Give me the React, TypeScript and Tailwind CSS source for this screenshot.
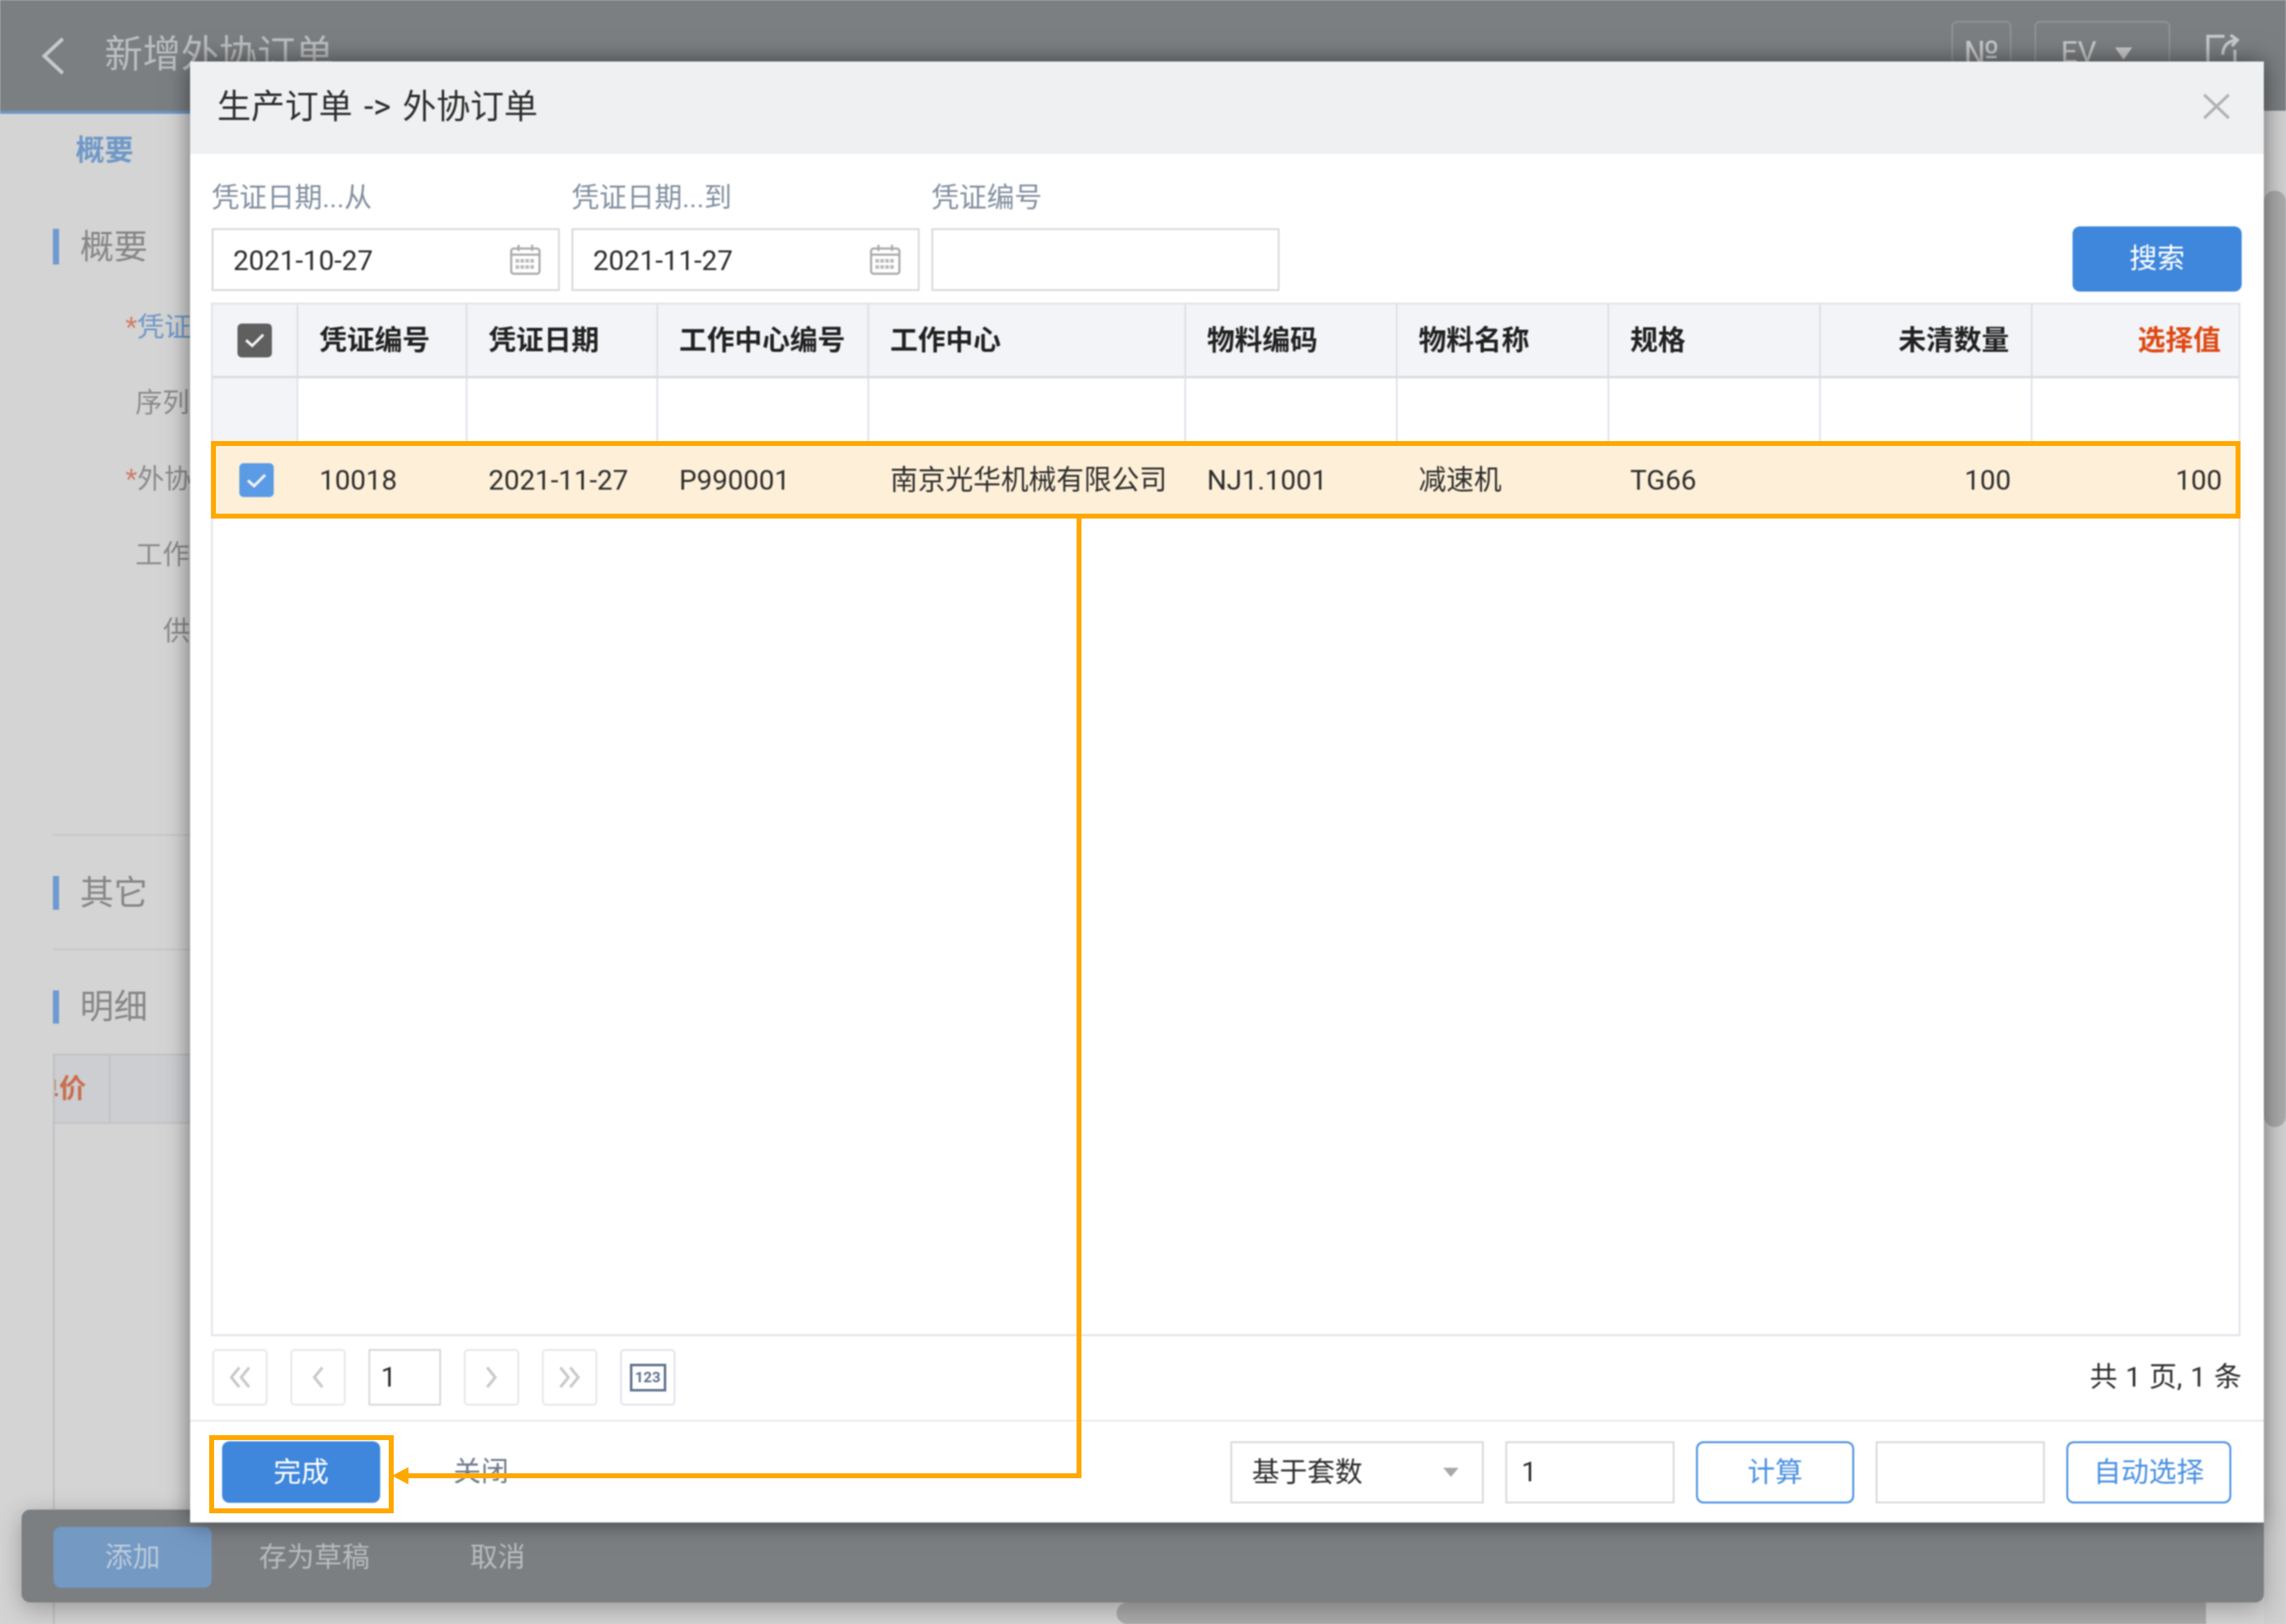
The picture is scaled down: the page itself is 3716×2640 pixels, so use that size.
import React from "react";

const headers = [
  { t: "凭证编号", c: "pl-[34px] border-r-[3px]" },
  { t: "凭证日期", c: "pl-[34px] border-r-[3px]" },
  { t: "工作中心编号", c: "pl-[34px] border-r-[3px]" },
  { t: "工作中心", c: "pl-[34px] border-r-[3px]" },
  { t: "物料编码", c: "pl-[34px] border-r-[3px]" },
  { t: "物料名称", c: "pl-[34px] border-r-[3px]" },
  { t: "规格", c: "pl-[34px] border-r-[3px]" },
  { t: "未清数量", c: "justify-end pr-[35px] border-r-[3px]" },
  { t: "选择值", c: "justify-end pr-[29px] text-[#dd4a14]" },
];

const row = [
  { t: "10018", c: "pl-[34px]" },
  { t: "2021-11-27", c: "pl-[34px]" },
  { t: "P990001", c: "pl-[34px]" },
  { t: "南京光华机械有限公司", c: "pl-[34px]" },
  { t: "NJ1.1001", c: "pl-[34px]" },
  { t: "减速机", c: "pl-[34px]" },
  { t: "TG66", c: "pl-[34px]" },
  { t: "100", c: "justify-end pr-[35px]" },
  { t: "100", c: "justify-end pr-[27px]" },
];

const cols = "grid grid-cols-[139px_275px_310px_343px_515px_344px_344px_344px_344px_335px]";

function Calendar() {
  return (
    <svg width="52" height="52" viewBox="0 0 52 52" fill="none" className="shrink-0">
      <rect x="3" y="8" width="46" height="41" rx="4" stroke="#ababab" strokeWidth="3.5" />
      <path d="M3 18h46" stroke="#ababab" strokeWidth="3.5" />
      <path d="M15 2v10M37 2v10" stroke="#ababab" strokeWidth="3.5" />
      <g fill="#bdbdbd">
        {[10, 18, 26, 34].map((x) => (
          <React.Fragment key={x}>
            <rect x={x} y="25" width="6" height="6" />
            <rect x={x} y="35" width="6" height="6" />
          </React.Fragment>
        ))}
      </g>
    </svg>
  );
}

function Check({ bg }: { bg: string }) {
  return (
    <div className={`w-[56px] h-[55px] rounded-[7px] flex items-center justify-center ${bg}`}>
      <svg width="34" height="26" viewBox="0 0 34 26" fill="none">
        <path d="M3 13l10 9L31 4" stroke="#f4f4f4" strokeWidth="4.5" />
      </svg>
    </div>
  );
}

function DateField({ label, value, icon }: { label: string; value: string; icon?: boolean }) {
  return (
    <div className="flex flex-col w-[566px] mb-[1px]">
      <div className="h-[60px] leading-[64px] mb-[21px] text-[#8390a0] text-[45px]">{label}</div>
      <div className="h-[102px] border-[3px] border-[#dadada] flex items-center justify-between pl-[32px] pr-[27px] text-[45px] text-[#2c2c2c]">
        <span className="pt-[4px]">{value}</span>
        {icon && <Calendar />}
      </div>
    </div>
  );
}

function PagerBtn({ d }: { d: string }) {
  return (
    <div className="w-[90px] h-[92px] border-[3px] border-[#e7e8ea] rounded-[7px] flex items-center justify-center">
      <svg width="42" height="36" viewBox="0 0 42 36" fill="none">
        <path d={d} stroke="#c9c9c9" strokeWidth="4.5" />
      </svg>
    </div>
  );
}

const labels = [
  { star: true, t: "凭证日期", c: "ml-[118px] text-[#6f98c8]" },
  { star: false, t: "序列号码", c: "ml-[134px] text-[#8b8b8b]" },
  { star: true, t: "外协订单", c: "ml-[118px] text-[#8b8b8b]" },
  { star: false, t: "工作中心", c: "ml-[134px] text-[#8b8b8b]" },
  { star: false, t: "供应商", c: "ml-[179px] text-[#8b8b8b]" },
];

export default function App() {
  return (
    <div className="relative w-[3716px] h-[2640px] overflow-hidden bg-[#d4d4d4] font-['Roboto','Noto_Sans_CJK_SC',sans-serif]">
      <div className="absolute inset-0 blur-[1.2px]">
        {/* page below the dialog */}
        <div className="h-full flex flex-col">
          <header className="h-[185px] shrink-0 bg-[#7b7f82] border-b-[5px] border-[#6d95c6] flex items-start">
            <svg width="40" height="60" viewBox="0 0 40 60" fill="none" className="ml-[66px] mt-[61px]">
              <path d="M36 2L6 30l30 28" stroke="#c6c8c9" strokeWidth="6" />
            </svg>
            <div className="ml-[64px] mt-[54px] text-[62px] leading-[70px] text-[#bcbebf]">新增外协订单</div>
            <div className="ml-auto mt-[34px] w-[98px] h-[100px] border-[3px] border-[#8e9295] rounded-[9px] flex justify-center pt-[20px] text-[56px] leading-[60px] text-[#c6c8c9]">
              №
            </div>
            <div className="ml-[37px] mt-[34px] w-[221px] h-[100px] border-[3px] border-[#8e9295] rounded-[9px] flex items-start pl-[40px] pt-[20px] text-[48px] leading-[56px] text-[#c6c8c9]">
              EV
              <svg width="28" height="20" viewBox="0 0 28 20" className="ml-[30px] mt-[20px]">
                <path d="M0 0h28L14 20z" fill="#c6c8c9" />
              </svg>
            </div>
            <svg width="56" height="46" viewBox="0 0 56 46" fill="none" className="ml-[58px] mr-[74px] mt-[55px]">
              <path d="M30 4H3v42M47 46V26" stroke="#c6c8c9" strokeWidth="5" />
              <path d="M27 34C28 20 34 12 50 10M40 2l11 8-9 10" stroke="#c6c8c9" strokeWidth="5" />
            </svg>
          </header>

          <div className="flex-1 flex flex-col pl-[86px] min-h-0">
            <div className="h-[114px] shrink-0 flex items-center pl-[37px] pt-[4px] text-[47px] font-bold text-[#6f98c8]">概要</div>
            <div className="mt-[73px] h-[58px] shrink-0 flex items-center border-l-[10px] border-[#6f9ad0] pl-[34px] text-[55px] text-[#868686]">概要</div>
            <div className="mt-[39px] shrink-0 flex flex-col">
              {labels.map((l) => (
                <div key={l.t} className={`h-[123.5px] flex items-center pt-[2px] text-[44px] ${l.c}`}>
                  {l.star && <span className="text-[#cf7d6a]">*</span>}
                  {l.t}
                </div>
              ))}
            </div>
            <div className="mt-[269px] border-t-[3px] border-[#c8c8c8] shrink-0" />
            <div className="mt-[65px] h-[55px] shrink-0 flex items-center border-l-[10px] border-[#6f9ad0] pl-[34px] text-[55px] text-[#868686]">其它</div>
            <div className="mt-[63px] border-t-[3px] border-[#c8c8c8] shrink-0" />
            <div className="mt-[65px] h-[54px] shrink-0 flex items-center border-l-[10px] border-[#6f9ad0] pl-[34px] text-[55px] text-[#868686]">明细</div>
            <div className="mt-[49px] flex-1 flex flex-col border-l-[3px] border-[#bfc0c4]">
              <div className="h-[114px] shrink-0 flex bg-[#cdced1] border-y-[3px] border-[#c2c3c7]">
                <div className="w-[91px] overflow-hidden flex items-center justify-end pr-[37px] border-r-[3px] border-[#c2c3c7] text-[44px] font-bold text-[#c96f50] whitespace-nowrap shrink-0">
                  单价
                </div>
              </div>
            </div>
          </div>
        </div>

        {/* window scrollbars */}
        <div className="absolute right-0 top-[180px] bottom-0 w-[36px] bg-[#d0d0d0]">
          <div className="absolute left-0 right-0 top-[130px] h-[1522px] rounded-full bg-[#ababab]" />
        </div>
        <div className="absolute left-[1815px] bottom-0 w-[1771px] h-[35px] rounded-l-full bg-[#ababab]" />

        {/* page footer */}
        <div className="absolute left-[35px] top-[2454px] w-[3645px] h-[151px] bg-[#7b7f82] rounded-[14px] shadow-[0_10px_40px_rgba(0,0,0,0.28)] flex items-start pt-[28px] pl-[52px] text-[45px] text-[#b9bbbc]">
          <div className="w-[257px] h-[99px] rounded-[12px] bg-[#7499c3] flex items-center justify-center text-[#bccbdc]">添加</div>
          <div className="h-[99px] flex items-center ml-[77px]">存为草稿</div>
          <div className="h-[99px] flex items-center ml-[163px]">取消</div>
        </div>

        {/* dialog */}
        <div className="absolute left-[309px] top-[100px] w-[3371px] h-[2375px] bg-white flex flex-col shadow-[0_0_36px_rgba(0,0,0,0.5)]">
          <div className="h-[150px] shrink-0 bg-[#eff0f2] flex items-center justify-between pl-[44px] pr-[55px] pb-[4px] text-[55px] [word-spacing:5px] text-[#2e2e2e]">
            <span>生产订单 -&gt; 外协订单</span>
            <svg width="44" height="42" viewBox="0 0 44 42" fill="none">
              <path d="M2 2l40 38M42 2L2 40" stroke="#b0b2b3" strokeWidth="4.5" />
            </svg>
          </div>

          <div className="h-[224px] shrink-0 pl-[35px] pr-[36px] flex items-end gap-[19px]">
            <DateField label="凭证日期...从" value="2021-10-27" icon />
            <DateField label="凭证日期...到" value="2021-11-27" icon />
            <DateField label="凭证编号" value="" />
            <button className="ml-auto w-[275px] h-[106px] rounded-[12px] bg-[#3f87dc] text-white text-[45px]">搜索</button>
          </div>

          <div className="ml-[34px] mt-[18px] w-[3299px] h-[1680px] shrink-0 border-[3px] border-[#e2e4ec] text-[45px] text-[#2e2e2e]">
            <div className={`${cols} h-[120px] bg-[#f3f4f8] border-b-[4px] border-[#dcdde1] font-semibold text-[#222]`}>
              <div className="flex items-center justify-center border-r-[3px] border-[#dfe1e8]">
                <Check bg="bg-[#5f5f5f]" />
              </div>
              {headers.map((h) => (
                <div key={h.t} className={`flex items-center pt-[2px] border-[#dfe1e8] ${h.c}`}>{h.t}</div>
              ))}
            </div>
            <div className={`${cols} h-[110px]`}>
              <div className="bg-[#f3f4f8] border-r-[3px] border-[#e2e4ec]" />
              {headers.map((h, i) => (
                <div key={h.t} className={i < 8 ? "border-r-[3px] border-[#e2e4ec]" : ""} />
              ))}
            </div>
            <div className={`${cols} h-[111px] bg-[#fef0d8]`}>
              <div className="flex items-center justify-center pl-[3px]">
                <Check bg="bg-[#5b9be6]" />
              </div>
              {row.map((r, i) => (
                <div key={i} className={`flex items-center ${r.c}`}>{r.t}</div>
              ))}
            </div>
          </div>

          <div className="ml-[36px] mr-[36px] mt-[21px] h-[92px] shrink-0 flex items-center gap-[37px] text-[45px] text-[#2e2e2e]">
            <PagerBtn d="M20 2L7 18l13 16M36 2L23 18l13 16" />
            <PagerBtn d="M28 2L15 18l13 16" />
            <div className="w-[118px] h-[92px] border-[3px] border-[#d9d9d9] flex items-center pl-[17px]">1</div>
            <PagerBtn d="M14 2l13 16-13 16" />
            <PagerBtn d="M6 2l13 16L6 34M22 2l13 16-13 16" />
            <div className="w-[90px] h-[92px] border-[3px] border-[#e2e4ec] rounded-[7px] flex items-center justify-center">
              <div className="w-[59px] h-[45px] border-[4px] border-[#5f7290] flex items-center justify-center text-[24px] font-bold text-[#5f7290]">123</div>
            </div>
            <span className="ml-auto [word-spacing:2px]">共 1 页, 1 条</span>
          </div>

          <div className="mt-[23px] flex-1 border-t-[3px] border-[#eaebed] flex items-center justify-between pl-[52px] pr-[53px] text-[45px]">
            <div className="flex items-center">
              <button className="w-[257px] h-[100px] rounded-[12px] bg-[#3f87dc] text-white pt-[2px]">完成</button>
              <span className="ml-[119px] text-[#6f7b8c]">关闭</span>
            </div>
            <div className="flex items-center gap-[35px] text-[#2e2e2e]">
              <div className="w-[412px] h-[101px] border-[3px] border-[#dadada] flex items-center justify-between pl-[32px] pr-[38px]">
                <span className="pt-[2px]">基于套数</span>
                <svg width="25" height="15" viewBox="0 0 25 15">
                  <path d="M0 0h25L12.5 15z" fill="#a9a9a9" />
                </svg>
              </div>
              <div className="w-[275px] h-[101px] border-[3px] border-[#dadada] flex items-center pl-[23px]">1</div>
              <button className="w-[257px] h-[101px] rounded-[12px] border-[3px] border-[#4a90e2] text-[#4a90e2] pt-[2px]">计算</button>
              <div className="w-[275px] h-[101px] border-[3px] border-[#dadada]" />
              <button className="w-[268px] h-[101px] rounded-[12px] border-[3px] border-[#4a90e2] text-[#4a90e2] pt-[2px]">自动选择</button>
            </div>
          </div>
        </div>
      </div>

      {/* orange callouts */}
      <div className="absolute left-[343px] top-[717px] w-[3299px] h-[126px] border-[8px] border-[#ffa800]" />
      <div className="absolute left-[340px] top-[2333px] w-[300px] h-[127px] border-[8px] border-[#ffa800]" />
      <svg className="absolute inset-0 pointer-events-none" width="3716" height="2640" viewBox="0 0 3716 2640" fill="none">
        <path d="M1754 843V2399H660" stroke="#ffa800" strokeWidth="8" />
        <path d="M637 2399l27-14v28z" fill="#ffa800" />
      </svg>
    </div>
  );
}
